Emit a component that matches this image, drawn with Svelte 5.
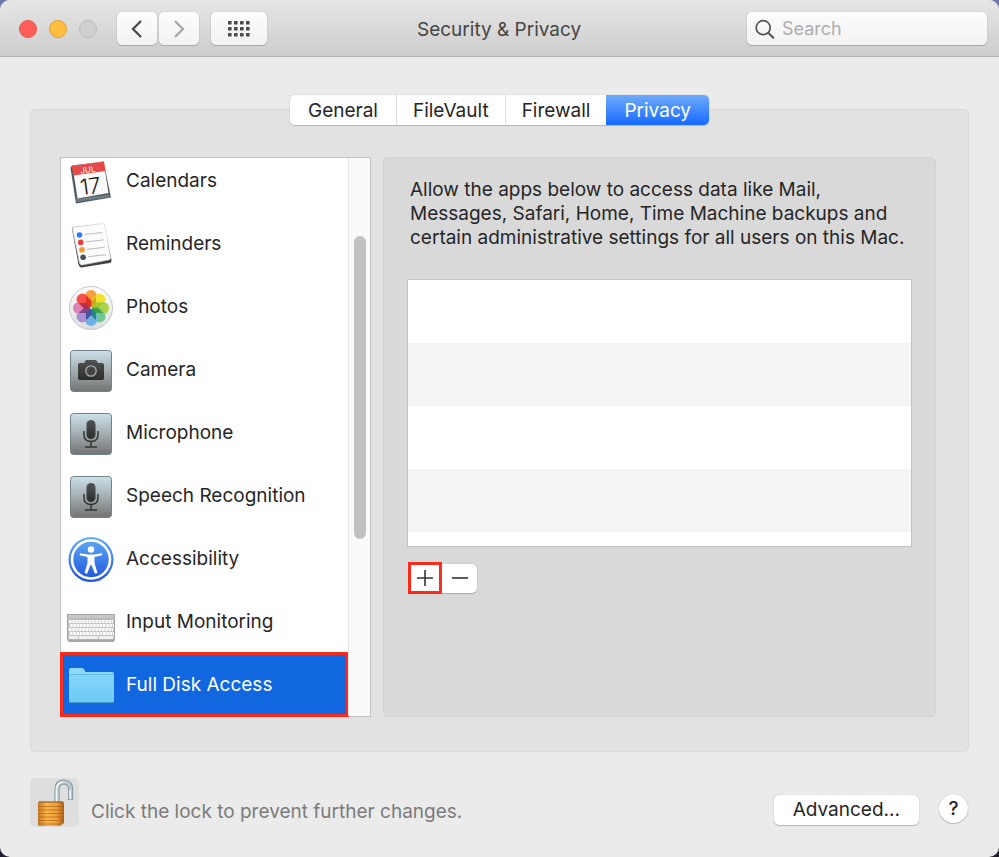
<script lang="ts">
	interface Service {
		name: string;
		icon: string;
	}

	const tabs = ['General', 'FileVault', 'Firewall', 'Privacy'];

	const services: Service[] = [
		{ name: 'Calendars', icon: 'calendar' },
		{ name: 'Reminders', icon: 'reminders' },
		{ name: 'Photos', icon: 'photos' },
		{ name: 'Camera', icon: 'camera' },
		{ name: 'Microphone', icon: 'mic' },
		{ name: 'Speech Recognition', icon: 'mic' },
		{ name: 'Accessibility', icon: 'accessibility' },
		{ name: 'Input Monitoring', icon: 'keyboard' },
		{ name: 'Full Disk Access', icon: 'folder' }
	];

	// clockwise from the top, with the darker wedge where each one meets the next
	const petals = [
		{ color: '#f9a03f', wedge: '#d9a018' },
		{ color: '#f2e22c', wedge: '#a9c61f' },
		{ color: '#a9d34c', wedge: '#3d9a3a' },
		{ color: '#6cc795', wedge: '#1f8079' },
		{ color: '#6fb2ea', wedge: '#32509f' },
		{ color: '#a78fd0', wedge: '#71408c' },
		{ color: '#d985b6', wedge: '#b02c4c' },
		{ color: '#f4524a', wedge: '#dd2f1c' }
	];
	const bullets = ['#2f7bf6', '#e8413c', '#f59a2d', '#4a4f58'];
	const keyRows = [23, 27, 31, 35];

	let activeTab = 'Privacy';
	let selected = 'Full Disk Access';
	let query = '';
</script>

<!-- gradients shared by the icons -->
<svg class="defs" width="0" height="0" aria-hidden="true">
	<defs>
		<linearGradient id="tile" x1="0" y1="0" x2="0" y2="1">
			<stop offset="0" stop-color="#cbe1e8" />
			<stop offset="0.5" stop-color="#a3adb0" />
			<stop offset="1" stop-color="#727272" />
		</linearGradient>
		<linearGradient id="dark" x1="0" y1="0" x2="0" y2="1">
			<stop offset="0" stop-color="#505254" />
			<stop offset="1" stop-color="#2d2d2d" />
		</linearGradient>
		<linearGradient id="blue" x1="0" y1="0" x2="0" y2="1">
			<stop offset="0" stop-color="#62aef5" />
			<stop offset="1" stop-color="#1c50dc" />
		</linearGradient>
		<linearGradient id="folder" x1="0" y1="0" x2="0" y2="1">
			<stop offset="0" stop-color="#84d6fa" />
			<stop offset="1" stop-color="#6bcaf4" />
		</linearGradient>
		<linearGradient id="disc" x1="0" y1="0" x2="0" y2="1">
			<stop offset="0" stop-color="#fdfdfd" />
			<stop offset="1" stop-color="#dedfe1" />
		</linearGradient>
		<linearGradient id="brass" x1="0" y1="0" x2="1" y2="0">
			<stop offset="0" stop-color="#c77a25" />
			<stop offset="0.35" stop-color="#fdb54a" />
			<stop offset="0.7" stop-color="#efa03a" />
			<stop offset="1" stop-color="#ad5f17" />
		</linearGradient>
	</defs>
</svg>

<div class="window">
	<header>
		<div class="lights">
			<button class="light close" aria-label="Close"></button>
			<button class="light minimize" aria-label="Minimize"></button>
			<button class="light zoom" aria-label="Zoom" disabled></button>
		</div>
		<div class="nav">
			<button class="tool" aria-label="Back">
				<svg width="12" height="20" viewBox="0 0 12 20"><path d="M10 2 2 10l8 8" fill="none" stroke="#444" stroke-width="2.2" /></svg>
			</button>
			<button class="tool" aria-label="Forward">
				<svg width="12" height="20" viewBox="0 0 12 20"><path d="m2 2 8 8-8 8" fill="none" stroke="#a6a6a6" stroke-width="2.2" /></svg>
			</button>
		</div>
		<button class="tool all" aria-label="Show All">
			<svg width="22" height="16" viewBox="0 0 22 16" fill="#4a4a4a">
				{#each [0, 6, 12] as y}
					{#each [0, 6, 12, 18] as x}
						<rect {x} {y} width="3.6" height="3.6" rx="0.6" />
					{/each}
				{/each}
			</svg>
		</button>
		<h1>Security &amp; Privacy</h1>
		<label class="search">
			<svg width="20" height="20" viewBox="0 0 20 20" fill="none" stroke="#555" stroke-width="1.7">
				<circle cx="8.2" cy="8.7" r="7" />
				<path d="m13.3 13.800 5.500 5.500" stroke-width="2" />
			</svg>
			<input type="search" placeholder="Search" aria-label="Search" bind:value={query} />
		</label>
	</header>

	<main>
		<div class="tabs" role="tablist">
			{#each tabs as tab}
				<button role="tab" aria-selected={tab === activeTab} class:active={tab === activeTab} on:click={() => (activeTab = tab)}>
					{tab}
				</button>
			{/each}
		</div>

		<section class="pane">
			<div class="sidebar">
				<div class="services">
					{#each services as service}
						<button class="service" class:selected={service.name === selected} on:click={() => (selected = service.name)}>
							<svg width="48" height="48" viewBox="0 0 48 48" aria-hidden="true">
								{#if service.icon === 'calendar'}
									<path d="M3.500 11 5 8.500 36.500 4.500 44 40.500 9 46.500z" fill="#4d5a62" />
									<path d="m9 42 33-4.500 1 2.500L9.500 45z" fill="#6f7c83" />
									<path d="M5.500 9 36.500 4.500 41.500 36 10.500 41.500z" fill="#fafafa" />
									<path d="M4.500 9 37 4.500l1.500 9.500L6.500 18.500z" fill="#e8484a" />
									<g transform="rotate(-8 23 25)" fill="#fff" text-anchor="middle">
										<text x="22.500" y="15.500" font-size="8">JUL</text>
										<text x="23" y="37" font-size="22" font-weight="300" fill="#222">17</text>
									</g>
								{:else if service.icon === 'reminders'}
									<path d="M5 9q0-2 2-2l27-3q3 0 3 2l7.500 34q0 3-2 3l-28 4.500q-2 0-3-3z" fill="#3f4145" />
									<path d="M5.500 9q0-2 2-2l28-3.500q2 0 2.500 2L43.500 38q0 2-2 2L15 45q-2 0-2.500-2z" fill="#fcfcfc" stroke="#d2d2d2" stroke-width="0.6" />
									{#each bullets as color, i}
										<circle cx={12.5 + i * 1.2} cy={15 + i * 7.4} r="2.8" fill={color} />
										<path d="M{17.5 + i * 1.2} {14.5 + i * 7.4}l18-2" stroke="#b5b5b5" stroke-width="0.9" />
									{/each}
								{:else if service.icon === 'photos'}
									<circle cx="24" cy="25" r="21.5" fill="url(#disc)" stroke="#c4c6c9" />
									{#each petals as petal, i}
										<rect x="18.2" y="7" width="11.6" height="18" rx="5.6" fill={petal.color} transform="rotate({i * 45} 24 25)" />
									{/each}
									{#each petals as petal, i}
										<path d="M24 25 21 19 24 12 27 19z" fill={petal.wedge} opacity="0.9" transform="rotate({i * 45 + 22.5} 24 25)" />
									{/each}
									<circle cx="24" cy="25" r="1" fill="#fff" />
								{:else if service.icon === 'camera'}
									<rect x="3.5" y="4.5" width="41" height="41" rx="3" fill="url(#tile)" stroke="#71828b" />
									<path d="M13 17h4l2-3h10l2 3h4q2 0 2 2v13q0 2-2 2H13q-2 0-2-2V19q0-2 2-2z" fill="url(#dark)" />
									<circle cx="24" cy="25" r="5.2" fill="#444" stroke="#a9b0b2" stroke-width="1.3" />
								{:else if service.icon === 'mic'}
									<rect x="3.5" y="4.5" width="41" height="41" rx="3" fill="url(#tile)" stroke="#71828b" />
									<rect x="19.5" y="11" width="9" height="19" rx="4.5" fill="url(#dark)" />
									<path d="M17 22v3.500q0 7 7 7t7-7V22M24 32.500v5M18 38h12" fill="none" stroke="#333" stroke-width="1.5" />
								{:else if service.icon === 'accessibility'}
									<ellipse cx="24" cy="45.5" rx="11" ry="1.5" fill="#ccc" />
									<circle cx="24" cy="24.5" r="22.5" fill="url(#blue)" />
									<circle cx="24" cy="24.5" r="19" fill="none" stroke="#fff" stroke-width="2.6" />
									<circle cx="24" cy="14.5" r="3.2" fill="#fff" />
									<path d="m13 18.200 8 1.300h6l8-1.300.3 2-7.800 1.800v6l3 10-2.500.7L24.500 30h-1L20 38.700l-2.500-.7 3-10v-6l-7.800-1.800z" fill="#fff" />
								{:else if service.icon === 'keyboard'}
									<rect x="1" y="18" width="46" height="26" rx="1" fill="#aaa" />
									<rect x="0.5" y="16.5" width="47" height="25.5" fill="#c6c6c6" stroke="#a5a5a5" />
									<path d="M2 21h44" stroke="#a8a8a8" stroke-width="1" stroke-dasharray="2.5 0.6" />
									{#each keyRows as y, i}
										<path d="M{2 + (i % 2)} {y + 0.5}h44" stroke="#fafafa" stroke-width="3" stroke-dasharray="2.6 0.7" />
									{/each}
									<path d="M2 39.500h9M12 39.500h19M32 39.500h14" stroke="#f6f6f6" stroke-width="2.6" />
								{:else if service.icon === 'folder'}
									<path d="M2 9q0-2 2-2h11q1.500 0 2.200 1.500L18.500 11H45q2 0 2 2v5H2z" fill="#8ed8fa" />
									<path d="M2 14h45v26q0 2-2 2H4q-2 0-2-2z" fill="url(#folder)" />
									<path d="M2 13.500h45" stroke="#5bb8e2" stroke-width="0.8" />
									<path d="M3 41.500h43" stroke="#479cc8" />
								{/if}
							</svg>
							<span>{service.name}</span>
						</button>
					{/each}
				</div>
				<div class="scrollbar"><div class="thumb"></div></div>
			</div>

			<div class="detail">
				<p>Allow the apps below to access data like Mail, Messages, Safari, Home, Time Machine backups and certain administrative settings for all users on this Mac.</p>
				<div class="apps" role="listbox" aria-label="Allowed apps" tabindex="0"></div>
				<div class="actions">
					<button class="add" aria-label="Add">
						<svg width="18" height="18" viewBox="0 0 18 18"><path d="M9 1v16M1 9h16" stroke="#333" stroke-width="1.6" /></svg>
					</button>
					<button class="remove" aria-label="Remove">
						<svg width="18" height="18" viewBox="0 0 18 18"><path d="M1 9h16" stroke="#333" stroke-width="1.6" /></svg>
					</button>
				</div>
			</div>
		</section>
	</main>

	<footer>
		<button class="lock" aria-label="Lock">
			<svg width="49" height="49" viewBox="0 0 49 49">
				<path d="M27 25V11.500q0-7.500 6.800-7.500t6.800 7.500V22" fill="none" stroke="#75868c" stroke-width="5" />
				<path d="M27 25V11.500q0-7.500 6.800-7.500t6.800 7.500V21.500" fill="none" stroke="#b9c8ce" stroke-width="3.6" />
				<path d="M26.500 24V11.500q0-7 7-7.500M40 21v-9" fill="none" stroke="#f5fafb" stroke-width="1.5" />
				<path d="M8 25q0-1.500 2-1.500h22q2 0 2 1.500v20l-4 3H10q-2 0-2-2z" fill="url(#brass)" />
				<path d="M8 28.500h26M8 32h26M8 35.500h26M8 39h26M8 42.500h26M8 46h24" stroke="#a25b18" stroke-width="1" opacity="0.6" />
				<path d="M9 24h24" stroke="#8c5520" />
			</svg>
		</button>
		<span class="hint">Click the lock to prevent further changes.</span>
		<button class="advanced">Advanced...</button>
		<button class="help" aria-label="Help">?</button>
	</footer>
</div>

<style>
	:global(body) {
		margin: 0;
		background: linear-gradient(#7079ad, #251b2c);
	}

	.defs {
		display: block;
	}

	.window {
		display: flex;
		flex-direction: column;
		min-height: 100vh;
		box-sizing: border-box;
		border-radius: 10px;
		overflow: hidden;
		background: #ebebeb;
		color: #262626;
		font-family: Inter, 'Liberation Sans', sans-serif;
		font-size: 19px;
		line-height: 24px;
	}

	button {
		margin: 0;
		padding: 0;
		border: none;
		background: #fff;
		color: inherit;
		font: inherit;
	}

	svg {
		flex: none;
	}

	header {
		display: grid;
		grid-template-columns: auto auto auto 1fr 240px;
		align-items: center;
		height: 55px;
		padding: 1px 12px 0 19px;
		border-bottom: 1px solid #b2b2b2;
		background: linear-gradient(#e6e6e6, #cdcdcd);
	}

	.lights {
		display: flex;
		gap: 12px;
	}

	.light {
		width: 18px;
		height: 18px;
		border: 1px solid #e2504a;
		border-radius: 50%;
		background: #ff5f58;
	}

	.minimize {
		border-color: #e0a030;
		background: #ffbe3c;
	}

	.zoom {
		border-color: #b9b9b9;
		background: #d0d0d0;
	}

	.nav {
		display: flex;
		gap: 2px;
		margin: 0 12px 0 20px;
	}

	.tool {
		display: flex;
		align-items: center;
		justify-content: center;
		width: 40px;
		height: 33px;
		border-radius: 5px;
		background: linear-gradient(#fdfdfd, #f2f2f2);
		box-shadow: 0 0 1px #999, 0 1px 1px #aaa;
	}

	.all {
		width: 56px;
	}

	h1 {
		margin: 0 0 0 150px;
		padding-top: 2px;
		color: #454545;
		font-size: 19px;
		font-weight: 400;
	}

	.search {
		display: flex;
		align-items: center;
		gap: 7px;
		height: 33px;
		padding: 0 8px;
		box-sizing: border-box;
		border-radius: 5px;
		background: linear-gradient(#fdfdfd, #f2f2f2);
		box-shadow: 0 0 1px #999, 0 1px 1px #aaa;
	}

	.search input {
		width: 100%;
		min-width: 0;
		padding: 0;
		border: none;
		outline: none;
		background: none;
		color: #333;
		font: inherit;
		font-size: 18px;
	}

	.search input::placeholder {
		color: #adadad;
	}

	main {
		display: flex;
		flex-direction: column;
		padding: 38px 30px 0;
	}

	/* the tab bar straddles the top edge of the pane */
	.tabs {
		z-index: 1;
		display: flex;
		align-self: center;
		margin-bottom: -16px;
		border-radius: 5px;
		background: #fff;
		box-shadow: 0 0 1px #999, 0 1px 1px #bbb;
	}

	.tabs button {
		height: 30px;
		padding: 1px 16px 0;
		border-left: 1px solid #dcdcdc;
	}

	.tabs button:first-child {
		padding: 1px 18px 0;
		border-left: none;
		border-radius: 5px 0 0 5px;
	}

	.tabs button:last-child {
		padding: 1px 18px 0;
		border-radius: 0 5px 5px 0;
	}

	.tabs button.active {
		border-left: none;
		background: linear-gradient(#6faafa, #166bff);
		color: #fff;
	}

	.pane {
		display: grid;
		grid-template-columns: 311px 1fr;
		gap: 12px;
		padding: 47px 32px 34px 29px;
		border: 1px solid #dadada;
		border-radius: 5px;
		background: #e2e2e2;
	}

	.sidebar {
		display: flex;
		height: 560px;
		box-sizing: border-box;
		border: 1px solid #c2c2c2;
		background: #fff;
	}

	/* list is scrolled to its last entry */
	.services {
		display: flex;
		flex: 1;
		flex-direction: column;
		justify-content: flex-end;
		margin: -1px;
		border-top: 1px solid #c2c2c2;
		overflow: hidden;
	}

	.service {
		display: flex;
		flex: none;
		align-items: center;
		gap: 11px;
		height: 63px;
		padding: 3px 6px 0;
		border-left: 1px solid #c2c2c2;
		text-align: left;
	}

	.service.selected {
		height: 65px;
		padding: 1px 4px 0;
		border: 3px solid #fb2a1b;
		background: #1067df;
		color: #fff;
	}

	.scrollbar {
		display: flex;
		align-items: flex-start;
		justify-content: center;
		width: 21px;
		padding-top: 78px;
		border-left: 1px solid #e8e8e8;
		background: #fafafa;
	}

	.thumb {
		width: 12px;
		height: 303px;
		border-radius: 6px;
		background: #c1c1c1;
	}

	.detail {
		padding: 20px 23px;
		border: 1px solid #d3d3d3;
		border-radius: 5px;
		background: #d9d9d9;
	}

	p {
		margin: 0 0 29px 3px;
	}

	.apps {
		height: 266px;
		border: 1px solid #c2c2c2;
		outline: none;
		background: repeating-linear-gradient(#fff 0 63px, #f3f5f5 63px 126px);
	}

	.actions {
		display: flex;
		align-items: center;
		margin-top: 15px;
		padding-left: 1px;
	}

	.actions button {
		display: flex;
		align-items: center;
		justify-content: center;
		box-sizing: border-box;
	}

	.add {
		width: 34px;
		height: 32px;
		border: 3px solid #fb2a1b;
	}

	.remove {
		width: 35px;
		height: 29px;
		border-radius: 0 5px 5px 0;
		box-shadow: 0 0 1px #999, 0 1px 1px #aaa;
	}

	footer {
		display: flex;
		align-items: center;
		padding: 26px 31px 30px 30px;
	}

	.lock {
		display: flex;
		border-radius: 5px;
		background: #dedede;
	}

	.hint {
		flex: 1;
		margin-left: 12px;
		padding-top: 18px;
		color: #7b7b7b;
	}

	.advanced {
		height: 30px;
		margin-top: 14px;
		padding: 1px 19px 0;
		border-radius: 5px;
		box-shadow: 0 0 1px #999, 0 1px 1px #bbb;
	}

	.help {
		width: 29px;
		height: 29px;
		margin: 12px 0 0 20px;
		border-radius: 50%;
		box-shadow: 0 0 1px #999, 0 1px 1px #bbb;
		font-weight: 500;
	}
</style>
